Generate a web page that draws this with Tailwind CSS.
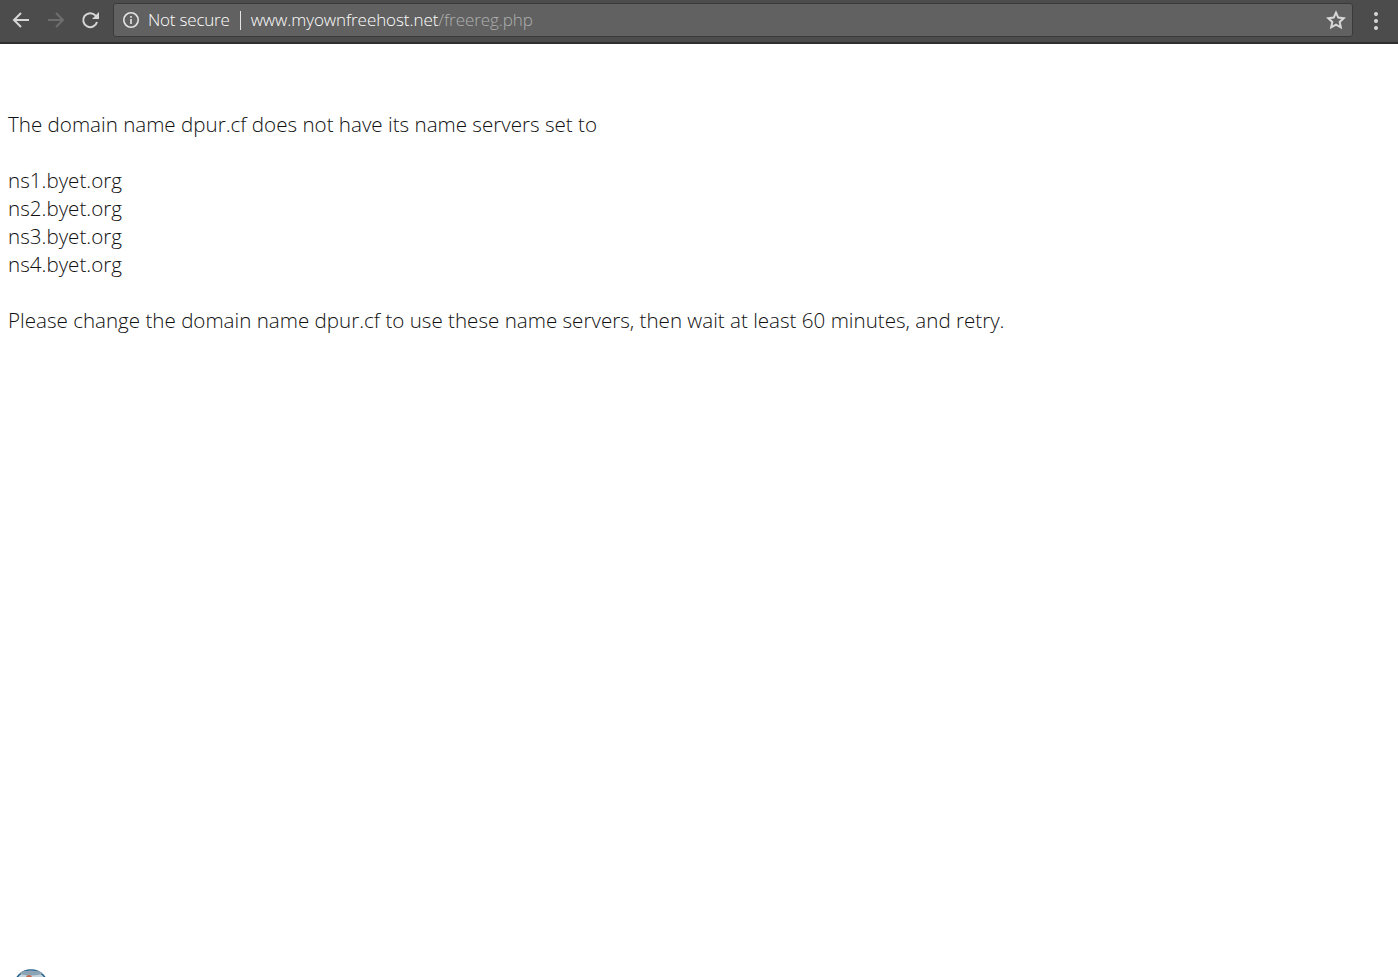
<!DOCTYPE html>
<html>
<head>
    <title>Domain not configured</title>
    <meta charset="utf-8" />
    <script src="https://cdn.jsdelivr.net/npm/@tailwindcss/browser@4"></script>
</head>
<body class="h-[977px] overflow-hidden bg-white font-['Open_Sans',sans-serif]">
    <!-- browser toolbar -->
    <div class="flex h-11 items-start border-b-2 border-[#2f2f2f] bg-[#4c4c4c] pt-[3px]">
        <div class="flex w-[113px] shrink-0 items-center pl-[11px] pt-[7px]">
            <svg class="h-5 w-5" viewBox="0 0 20 20" fill="none" stroke="#d6d6d6" stroke-width="2"><path d="M18 10H3M10 3l-7 7 7 7"/></svg>
            <svg class="ml-[15px] h-5 w-5" viewBox="0 0 20 20" fill="none" stroke="#6e6e6e" stroke-width="2"><path d="M2 10h15M10 3l7 7-7 7"/></svg>
            <svg class="ml-[15px] h-5 w-5" viewBox="0 0 20 20" fill="none" stroke="#d6d6d6" stroke-width="2"><path d="M16 12a7 7 0 1 1-1.6-6.6L17 8"/><path d="M18 2v7h-7" fill="#d6d6d6" stroke="none"/></svg>
        </div>
        <div class="flex h-[34px] w-[1240px] items-center rounded-[3px] border border-[#3a3a3a] bg-[#616161] pl-[8px] pr-[6px]">
            <svg class="h-[18px] w-[18px] shrink-0" viewBox="0 0 18 18" fill="none" stroke="#e4e4e4" stroke-width="1.6"><circle cx="9" cy="9" r="7.2"/><path d="M9 8v5M9 5v1.8"/></svg>
            <span class="ml-[8px] text-[17px] font-light tracking-[-0.2px] text-white">Not secure</span>
            <span class="ml-[10px] h-[19px] w-px bg-[#e4e4e4]"></span>
            <span class="ml-[10px] text-[17px] font-light tracking-[-0.07px] text-white">www.myownfreehost.net<span class="text-[#b0b0b0]">/freereg.php</span></span>
            <svg class="ml-auto h-5 w-5" viewBox="0 0 20 20" fill="none" stroke="#d8d8d8" stroke-width="2"><path d="M10 2.6l2.3 5 5.4.6-4 3.7 1.1 5.4L10 14.6l-4.8 2.7 1.1-5.4-4-3.7 5.4-.6z"/></svg>
        </div>
        <div class="flex flex-1 flex-col items-center gap-[3px] pt-[9px]">
            <span class="h-1 w-1 rounded-full bg-[#d8d8d8]"></span>
            <span class="h-1 w-1 rounded-full bg-[#d8d8d8]"></span>
            <span class="h-1 w-1 rounded-full bg-[#d8d8d8]"></span>
        </div>
    </div>

    <div class="pl-2 pt-[66px] text-[20.58px] leading-7 font-light text-[#111111]">
        <p>The domain name dpur.cf does not have its name servers set to</p>
        <p class="mt-7">ns1.byet.org</p>
        <p>ns2.byet.org</p>
        <p>ns3.byet.org</p>
        <p>ns4.byet.org</p>
        <p class="mt-7">Please change the domain name dpur.cf to use these name servers, then wait at least 60 minutes, and retry.</p>
    </div>

    <!-- globe logo, cut off by the window -->
    <svg class="absolute left-[13px] top-[969px] h-[36px] w-[36px]" viewBox="0 0 36 36">
        <circle cx="18" cy="18" r="17" fill="#c5d3dc" stroke="#1f5c88" stroke-width="1.5"/>
        <ellipse cx="18" cy="4" rx="11" ry="2.5" fill="#8ba3b2"/>
        <circle cx="16" cy="9" r="3" fill="#c2664a"/>
    </svg>
</body>
</html>
